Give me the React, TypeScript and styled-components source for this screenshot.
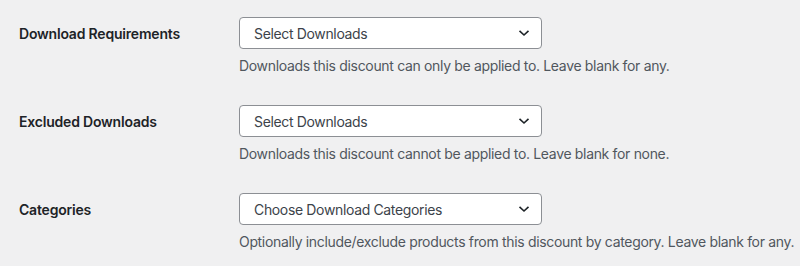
import React from "react";
import styled, { createGlobalStyle } from "styled-components";

const Global = createGlobalStyle`
  html, body { margin: 0; padding: 0; background: #f0f0f1; }
  body { font-family: Inter, "Noto Sans", "Liberation Sans", sans-serif; color: #1d2327; }
`;

const Page = styled.div`
  padding: 2px 0 0 19px;
  display: flex;
  flex-direction: column;
`;

const Row = styled.div`
  display: grid;
  grid-template-columns: 220px 1fr;
  padding: 15px 0 14px;
`;

const Label = styled.div`
  font-size: 14px;
  font-weight: 600;
  letter-spacing: -0.2px;
  height: 32px;
  display: flex;
  align-items: center;
  color: #1d2327;
`;

const Field = styled.div`
  display: flex;
  flex-direction: column;
`;

const Select = styled.div`
  box-sizing: border-box;
  width: 303px;
  height: 32px;
  border: 1px solid #8c8f94;
  border-radius: 4px;
  background: #fff;
  display: flex;
  align-items: center;
  justify-content: space-between;
  padding: 0 11px 0 14px;
  font-size: 14px;
  letter-spacing: -0.35px;
  color: #3c434a;
`;

const Desc = styled.p`
  margin: 6px 0 0;
  font-size: 14px;
  line-height: 21px;
  letter-spacing: -0.33px;
  white-space: nowrap;
  color: #50575e;
`;

const Chevron = () => (
  <svg width="12" height="8" viewBox="0 0 12 8" fill="none">
    <path d="M1.5 1.8 L6 6 L10.5 1.8" stroke="#1d2327" strokeWidth="1.6" />
  </svg>
);

const rows = [
  {
    label: "Download Requirements",
    placeholder: "Select Downloads",
    desc: "Downloads this discount can only be applied to. Leave blank for any.",
  },
  {
    label: "Excluded Downloads",
    placeholder: "Select Downloads",
    desc: "Downloads this discount cannot be applied to. Leave blank for none.",
  },
  {
    label: "Categories",
    placeholder: "Choose Download Categories",
    desc: "Optionally include/exclude products from this discount by category. Leave blank for any.",
  },
];

export default function App() {
  return (
    <>
      <Global />
      <Page>
        {rows.map((r) => (
          <Row key={r.label}>
            <Label>{r.label}</Label>
            <Field>
              <Select>
                <span>{r.placeholder}</span>
                <Chevron />
              </Select>
              <Desc>{r.desc}</Desc>
            </Field>
          </Row>
        ))}
      </Page>
    </>
  );
}
